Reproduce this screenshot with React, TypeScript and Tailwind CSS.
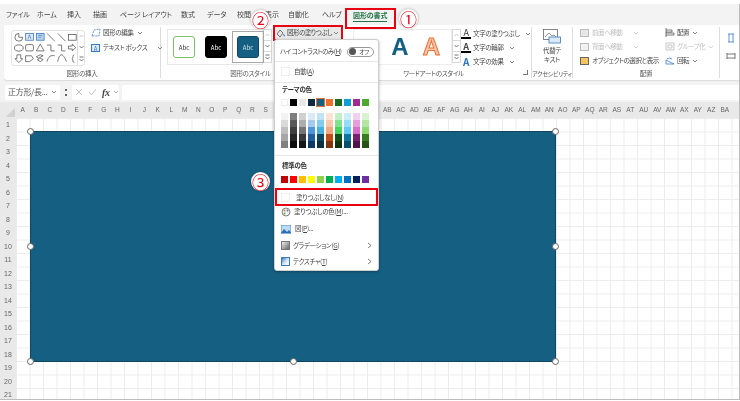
import React from "react";

const tabs: [string, number][] = [["ファイル",31],["ホーム",30],["挿入",26],["描画",27],["ページ レイアウト",61],["数式",26],["データ",30],["校閲",28],["表示",23],["自動化",34],["ヘルプ",31]];
const theme = ["#ffffff","#000000","#e8e8e8","#0e2841","#156082","#e97132","#196b24","#0f9ed5","#a02b93","#4ea72e"];
const tints = [
  ["#f2f2f2","#d9d9d9","#bfbfbf","#a6a6a6","#808080"],
  ["#7f7f7f","#595959","#3f3f3f","#262626","#0d0d0d"],
  ["#d0d0d0","#adadad","#757575","#3a3a3a","#171717"],
  ["#dceaf7","#a6caec","#4e95d9","#215f9a","#0d3a64"],
  ["#c1e4f5","#83cbeb","#45b0e1","#0f4761","#0a2f41"],
  ["#fbe3d6","#f6c6ad","#f1a983","#c04f15","#80350e"],
  ["#c1f0c8","#83e28e","#47d45a","#124f1a","#0d3512"],
  ["#caedfb","#95dcf7","#60caf3","#0b76a0","#074f6a"],
  ["#f2ceef","#e59edc","#d86dcd","#77206d","#4f1548"],
  ["#d9f2d0","#b4e5a2","#8ed973","#3a7c22","#275317"],
];
const standard = ["#c00000","#ff0000","#ffc000","#ffff00","#92d050","#00b050","#00b0f0","#0070c0","#002060","#7030a0"];
const letters = "ABCDEFGHIJKLMNOPQRSTUVWXYZ".split("");
const cols = [...letters, ...letters.map((l) => "A" + l), "BA"];
const rows = Array.from({ length: 21 }, (_, i) => i + 1);

function Chev({ c = "#666" }: { c?: string }) {
  return <svg width="6" height="4" viewBox="0 0 6 4" className="ml-[3px] shrink-0"><path d="M1 1l2 2 2-2" fill="none" stroke={c} strokeWidth="0.8" /></svg>;
}
function Scroll() {
  return (
    <div className="flex flex-col shrink-0 w-[9px] h-[34px] border border-[#d8d8d8] bg-white">
      <div className="flex-1 flex items-center justify-center border-b border-[#d8d8d8]"><svg width="5" height="4" viewBox="0 0 5 4"><path d="M.5 3l2-2 2 2" fill="none" stroke="#bbb" strokeWidth=".8" /></svg></div>
      <div className="flex-1 flex items-center justify-center border-b border-[#d8d8d8]"><svg width="5" height="4" viewBox="0 0 5 4"><path d="M.5 1l2 2 2-2" fill="none" stroke="#555" strokeWidth=".8" /></svg></div>
      <div className="flex-1 flex items-center justify-center"><svg width="5" height="6" viewBox="0 0 5 6"><path d="M.5 1h4M.5 3l2 2 2-2" fill="none" stroke="#555" strokeWidth=".8" /></svg></div>
    </div>
  );
}
function Label({ children }: { children: React.ReactNode }) {
  return <div className="h-[10px] leading-[10px] text-center text-[6.5px] text-[#555] shrink-0">{children}</div>;
}
function Abc({ bg, border, color }: { bg: string; border: string; color: string }) {
  return <div className="w-[22px] h-[22px] rounded-[3px] border flex items-center justify-center text-[6px] tracking-normal" style={{ background: bg, borderColor: border, color }}>Abc</div>;
}
function Gallery() {
  const s = { fill: "none", stroke: "#555", strokeWidth: 0.8 };
  return (
    <svg width="66" height="34" viewBox="0 0 66 34">
      <path d="M6 2a4 4 0 1 0 4 4H6z" {...s} />
      <rect x="13" y="2" width="8" height="7" fill="#dce9f7" stroke="#3a78c2" strokeWidth=".8" />
      <path d="M15.5 7.5L17 3.5l1.5 4" fill="none" stroke="#3a78c2" strokeWidth=".7" />
      <rect x="24" y="2" width="8" height="7" fill="#bcd6f0" stroke="#3a78c2" strokeWidth=".8" />
      <path d="M26 4h4M26 6h3" stroke="#3a78c2" strokeWidth=".7" />
      <path d="M35 2l8 8M46 2l8 8" {...s} />
      <rect x="57" y="3" width="8" height="6" {...s} />
      <ellipse cx="6" cy="17" rx="4.5" ry="3.2" {...s} />
      <rect x="13" y="13.5" width="8" height="6.5" rx="1.5" {...s} />
      <path d="M28 13l4 7h-8zM35 14h4v6h4M46 14h4v6h4M57 15h4v-2l3.5 3.5-3.5 3.5v-2h-4z" {...s} />
      <path d="M4 24h4v4h2l-4 4-4-4h2zM13 25h6l2 3-4 3h-4zM24 26l4-2 3 1-4 2 4 2-3 2-3-2 2-1zM35 31c1-5 4-7 8-6M46 31c1-6 3-7 4-7s3 2 5 7M63 24c-2 0-1 3-2 4 1 1 0 4 2 4" {...s} />
    </svg>
  );
}
function TextIcon({ kind }: { kind: "fill" | "line" | "fx" }) {
  if (kind === "fx") return <span className="w-[10px] text-center text-[10px] leading-none font-bold text-[#2e75b6]">A</span>;
  return (
    <span className="w-[10px] flex flex-col items-center">
      <span className={`text-[9px] leading-[8px] ${kind === "line" ? "font-bold text-[#444]" : "text-[#333]"}`}>A</span>
      <span className="block w-[10px] h-[2px] bg-black" />
    </span>
  );
}
function Handle({ cls }: { cls: string }) {
  return <span className={`absolute w-[7px] h-[7px] rounded-full bg-white border-[1.5px] border-[#666] ${cls}`} />;
}
function Badge({ cls, children }: { cls: string; children: string }) {
  return <span className={`absolute w-[19px] h-[19px] rounded-full bg-white shadow-[0_0_3px_rgba(0,0,0,0.3)] flex items-center justify-center text-[17px] leading-none tracking-normal text-[#e60012] ${cls}`}>{children}</span>;
}
function Swatches({ colors, sel }: { colors: string[]; sel?: number }) {
  return (
    <div className="flex gap-[2px] pl-[1px]">
      {colors.map((c, i) => (
        <span key={c} className={`w-[7px] h-[7px] ${i === sel ? "outline outline-[#e97132]" : ""} ${c === "#ffffff" ? "border border-[#eee]" : ""}`} style={{ background: c }} />
      ))}
    </div>
  );
}

export default function App() {
  return (
    <div className="relative w-[740px] h-[401px] overflow-hidden bg-white pt-[4px] text-[#444] blur-[0.35px] tracking-[-0.3px] [font-family:'Noto_Sans_CJK_JP','Noto_Sans',sans-serif] [font-feature-settings:'palt']">
      <div className="h-[396px] bg-[#f3f3f3] border-r border-b border-[#bdbdbd] flex flex-col overflow-hidden">
        {/* tabs */}
        <div className="h-[21px] flex items-center pl-[6px] text-[7px] tracking-[-0.1px] text-[#444] shrink-0">
          {tabs.map(([t, w]) => <span key={t} className="shrink-0 whitespace-nowrap" style={{ width: w }}>{t}</span>)}
          <span className="text-[#217346] font-bold border-b-[1.5px] border-[#217346] leading-[11px] mt-[2px] whitespace-nowrap">図形の書式</span>
        </div>
        {/* ribbon */}
        <div className="ml-[4px] h-[55px] shrink-0 bg-white rounded-l-[3px] flex shadow-[0_1px_1px_rgba(0,0,0,0.1)]">
          <div className="w-[157px] shrink-0 flex flex-col border-r border-[#ddd] my-[2px]">
            <div className="h-[43px] flex pl-[7px] pt-[3px] gap-[6px]">
              <div className="w-[74px] h-[36px] shrink-0 flex border border-[#e3e3e3] rounded-[3px] pl-[1px] items-center justify-between">
                <Gallery />
                <div className="flex flex-col gap-[1px] w-[7px] h-[34px] border-l border-[#ddd] items-center justify-around">
                  <svg width="5" height="4" viewBox="0 0 5 4"><path d="M.5 3l2-2 2 2" fill="none" stroke="#bbb" strokeWidth=".8" /></svg>
                  <svg width="5" height="4" viewBox="0 0 5 4"><path d="M.5 1l2 2 2-2" fill="none" stroke="#555" strokeWidth=".8" /></svg>
                  <svg width="5" height="6" viewBox="0 0 5 6"><path d="M.5 1h4M.5 3l2 2 2-2" fill="none" stroke="#555" strokeWidth=".8" /></svg>
                </div>
              </div>
              <div className="flex flex-col gap-[4px] -mt-[3px] text-[6.5px] whitespace-nowrap">
                <div className="h-[11px] flex items-center">
                  <svg width="10" height="9" viewBox="0 0 10 9" className="mr-[2px]"><path d="M1 8l2-6 6-1-1 7z" fill="none" stroke="#3a78c2" strokeWidth=".8" strokeDasharray="2 1" /></svg>
                  図形の編集<Chev />
                </div>
                <div className="h-[11px] flex items-center">
                  <span className="w-[9px] h-[8px] mr-[3px] border border-[#3a78c2] bg-[#dce9f7] text-[6px] leading-[7px] text-center text-[#3a78c2]">A</span>
                  テキスト ボックス<span className="ml-[7px]"><Chev /></span>
                </div>
              </div>
            </div>
            <Label>図形の挿入</Label>
          </div>

          <div className="w-[179px] shrink-0 flex flex-col my-[2px]">
            <div className="h-[43px] flex pl-[6px] pt-[2px]">
              <div className="w-[96px] h-[36px] shrink-0 border border-[#e8e8e8] flex items-center gap-[10px] pl-[5px]">
                <Abc bg="#ffffff" border="#7fbf6a" color="#333" />
                <Abc bg="#000000" border="#000000" color="#fff" />
                <div className="relative">
                  <Abc bg="#156082" border="#0f4761" color="#cfe4ee" />
                  <span className="absolute -inset-[5px] border border-[#a8a8a8]" />
                </div>
              </div>
              <Scroll />
            </div>
            <Label>図形のスタイル</Label>
          </div>

          <div className="w-[192px] shrink-0 flex flex-col border-r border-[#ddd] my-[2px]">
            <div className="h-[43px] flex pl-[13px] pt-[2px]">
              <div className="w-[99px] h-[36px] shrink-0 border border-[#eeeeee] flex items-center justify-end gap-[14px] pr-[11px] text-[24px] leading-none font-['Liberation_Sans'] font-bold tracking-normal">
                <span className="text-[#156082]">A</span>
                <span className="text-[#f6c6ad] [-webkit-text-stroke:1px_#e97132]">A</span>
              </div>
              <Scroll />
              <div className="ml-[0px] -mt-[1px] flex flex-col text-[6.5px] text-[#444] gap-[3px] whitespace-nowrap">
                {([["fill","文字の塗りつぶし"],["line","文字の輪郭"],["fx","文字の効果"]] as const).map(([k, t]) => (
                  <div key={t} className="h-[11px] flex items-center gap-[2px]"><TextIcon kind={k} />{t}<Chev /></div>
                ))}
              </div>
            </div>
            <div className="relative"><Label><span className="ml-[-4px]">ワードアートのスタイル</span></Label><span className="absolute right-[3px] top-[2px] w-[5px] h-[5px] border-b border-r border-[#777]" /></div>
          </div>

          <div className="w-[41px] shrink-0 flex flex-col border-r border-[#ddd] my-[2px]">
            <div className="h-[43px] flex flex-col items-center pt-[2px]">
              <svg width="18" height="15" viewBox="0 0 18 15"><rect x=".5" y=".5" width="14" height="10" fill="#fff" stroke="#666" strokeWidth=".8" /><path d="M2 8l4-4 3 3 2-1 2 2" fill="none" stroke="#666" strokeWidth=".7" /><rect x="6" y="8" width="11.5" height="6" fill="#dce9f7" stroke="#3a78c2" strokeWidth=".8" /></svg>
              <span className="text-[6.5px] leading-[9px] mt-[2px] text-center text-[#444]">代替テ<br />キスト</span>
            </div>
            <Label><span className="text-[6px] whitespace-nowrap">アクセシビリティ</span></Label>
          </div>

          <div className="w-[147px] shrink-0 flex flex-col border-r border-[#ddd] my-[2px]">
            <div className="h-[43px] flex pl-[7px] text-[6.5px] tracking-[-0.45px] whitespace-nowrap">
              <div className="w-[85px] shrink-0 flex flex-col gap-[3px]">
                <div className="h-[11px] flex items-center text-[#bbb]"><span className="w-[9px] h-[8px] mr-[3px] border border-[#bbb] bg-[#e8e8e8]" />前面へ移動<span className="ml-[8px]"><Chev c="#ccc" /></span></div>
                <div className="h-[11px] flex items-center text-[#bbb]"><span className="w-[9px] h-[8px] mr-[3px] border border-[#bbb] bg-[#f2f2f2]" />背面へ移動<span className="ml-[8px]"><Chev c="#ccc" /></span></div>
                <div className="h-[11px] flex items-center"><span className="w-[9px] h-[8px] mr-[3px] border border-[#666] bg-[#f7c55f]" />オブジェクトの選択と表示</div>
              </div>
              <div className="flex flex-col gap-[3px]">
                <div className="h-[11px] flex items-center"><svg width="10" height="9" viewBox="0 0 10 9" className="mr-[2px]"><path d="M1 0v9M1 2h6v2H1M1 5h8v2H1" fill="none" stroke="#555" strokeWidth=".8" /></svg>配置<Chev /></div>
                <div className="h-[11px] flex items-center text-[#bbb]"><svg width="10" height="9" viewBox="0 0 10 9" className="mr-[2px]"><path d="M1 1h8v7H1zM3 3h4v3H3z" fill="none" stroke="#bbb" strokeWidth=".8" /></svg>グループ化<Chev c="#ccc" /></div>
                <div className="h-[11px] flex items-center"><svg width="10" height="9" viewBox="0 0 10 9" className="mr-[2px]"><path d="M1 8h8L1 4zM2 3a4 4 0 0 1 5 0" fill="none" stroke="#3a78c2" strokeWidth=".8" /></svg>回転<Chev /></div>
              </div>
            </div>
            <Label>配置</Label>
          </div>

          <div className="flex-1 flex flex-col pl-[6px] pt-[8px] gap-[8px]">
            <svg width="10" height="10" viewBox="0 0 10 10"><path d="M2 1h6M2 9h6M3 1v8M7 1v8" fill="none" stroke="#3a78c2" strokeWidth=".8" /></svg>
            <svg width="10" height="10" viewBox="0 0 10 10"><path d="M1 2v6M9 2v6M1 3h8M1 7h8" fill="none" stroke="#555" strokeWidth=".8" /></svg>
          </div>
        </div>
        {/* formula bar */}
        <div className="h-[22px] shrink-0 flex items-center pl-[5px] pt-[2px] text-[#888]">
          <div className="w-[55px] h-[15px] bg-white rounded-[2px] flex items-center justify-between px-[3px] text-[8px] text-[#555] whitespace-nowrap">正方形/長...<Chev /></div>
          <span className="w-[2px] h-[7px] mx-[5px] border-l-2 border-dotted border-[#666]" />
          <div className="w-[47px] h-[15px] bg-white rounded-[2px] flex items-center gap-[5px] pl-[3px]">
            <svg width="8" height="8" viewBox="0 0 8 8"><path d="M1 1l6 6M7 1L1 7" stroke="#bbb" strokeWidth=".9" /></svg>
            <svg width="9" height="8" viewBox="0 0 9 8"><path d="M1 4l2.5 3L8 1" fill="none" stroke="#bbb" strokeWidth=".9" /></svg>
            <span className="font-['Liberation_Serif'] italic font-bold text-[10px] text-[#444]">fx</span>
            <svg width="6" height="4" viewBox="0 0 6 4" className="-ml-[2px]"><path d="M1 1l2 2 2-2" fill="none" stroke="#999" strokeWidth="0.8" /></svg>
          </div>
          <div className="ml-[3px] flex-1 h-[15px] bg-white rounded-l-[2px]" />
        </div>
        {/* column headers */}
        <div className="h-[16px] shrink-0 flex overflow-hidden bg-[#e9e9e9] text-[6.5px] tracking-normal text-[#666] font-['Liberation_Sans']">
          <div className="w-[16px] shrink-0 flex items-end justify-end pr-[1px] pb-[1px]"><svg width="9" height="9" viewBox="0 0 9 9"><path d="M9 0v9H0z" fill="#d2d2d2" /></svg></div>
          {cols.map((c) => <span key={c} className="w-[13.5px] shrink-0 text-center leading-[15px] whitespace-nowrap">{c}</span>)}
        </div>
        {/* sheet */}
        <div className="flex-1 flex min-h-0">
          <div className="w-[16px] shrink-0 bg-[#e9e9e9] text-[7px] tracking-normal text-[#666] font-['Liberation_Sans']">
            {rows.map((r) => <div key={r} className="h-[13.5px] leading-[13.5px] text-center">{r}</div>)}
          </div>
          <div className="relative flex-1 bg-white bg-[linear-gradient(#ececec_1px,transparent_1px),linear-gradient(90deg,#ececec_1px,transparent_1px)] bg-[size:13.5px_13.5px]">
            <div className="absolute left-[14px] top-[13px] w-[526px] h-[231px] bg-[#156082] border border-[#0f4761]">
              <Handle cls="-left-[4px] -top-[4px]" />
              <Handle cls="left-[259px] -top-[4px]" />
              <Handle cls="-right-[4px] -top-[4px]" />
              <Handle cls="-left-[4px] top-[111px]" />
              <Handle cls="-right-[4px] top-[111px]" />
              <Handle cls="-left-[4px] -bottom-[4px]" />
              <Handle cls="left-[259px] -bottom-[4px]" />
              <Handle cls="-right-[4px] -bottom-[4px]" />
            </div>
          </div>
        </div>
      </div>

      {/* dropdown button */}
      <div className="absolute left-[273px] top-[25px] w-[70px] h-[16px] bg-[#e8e8e8] border-[2.5px] border-[#e60012] flex items-center pl-[1px] text-[6.5px] tracking-[-0.5px] text-[#444] whitespace-nowrap">
        <svg width="10" height="9" viewBox="0 0 10 9" className="mr-[1px] shrink-0"><path d="M1 5l3-4 3 3-3 4z" fill="none" stroke="#555" strokeWidth=".8" /><path d="M7 5l2 1-1 2z" fill="#3a78c2" /></svg>
        図形の塗りつぶし
        <svg width="6" height="4" viewBox="0 0 6 4" className="ml-[1px] shrink-0"><path d="M1 1l2 2 2-2" fill="none" stroke="#666" strokeWidth="0.8" /></svg>
      </div>

      {/* menu */}
      <div className="absolute left-[274px] top-[39px] w-[105px] h-[232px] bg-white rounded-[3px] border border-[#cfcfcf] shadow-[0_1px_3px_rgba(0,0,0,0.3)] text-[6.5px] text-[#444] pl-[5px] flex flex-col whitespace-nowrap">
        <div className="h-[18px] mt-[3px] flex items-center">
          <span className="w-[67px] shrink-0 tracking-[-0.5px]">ハイ コントラストのみ(<u>H</u>)</span>
          <span className="w-[27px] h-[10px] shrink-0 rounded-full border border-[#999] flex items-center pl-[1px] text-[6px] gap-[3px]"><span className="w-[7px] h-[7px] rounded-full bg-[#555]" />オフ</span>
        </div>
        <div className="-ml-[5px] border-t border-[#e8e8e8]" />
        <div className="h-[21px] flex items-center pl-[1px]"><span className="w-[9px] h-[9px] border border-[#eee] mr-[4px]" />自動(<u>A</u>)</div>
        <div className="-ml-[5px] border-t border-[#e8e8e8]" />
        <div className="h-[13px] flex items-center pl-[2px] font-bold text-[#333]">テーマの色</div>
        <div className="mt-[3px]"><Swatches colors={theme} sel={4} /></div>
        <div className="flex gap-[2px] pl-[1px] mt-[7px]">
          {tints.map((col, i) => (
            <div key={i} className="flex flex-col w-[7px]">
              {col.map((c, j) => <span key={j} className="h-[7px] block" style={{ background: c }} />)}
            </div>
          ))}
        </div>
        <div className="-ml-[5px] mt-[7px] border-t border-[#e8e8e8]" />
        <div className="h-[13px] mt-[4px] flex items-center pl-[2px] font-bold text-[#333]">標準の色</div>
        <div className="mt-[3px]"><Swatches colors={standard} /></div>
        <div className="h-[18px] mt-[6px] flex items-center pl-[1px]"><span className="w-[9px] h-[9px] border border-[#eee] mr-[6px]" />塗りつぶしなし(<u>N</u>)</div>
        <div className="h-[16px] -mt-[2px] flex items-center pl-[1px]"><svg width="10" height="10" viewBox="0 0 10 10" className="mr-[3px]"><circle cx="5" cy="5" r="4" fill="#f4f4f4" stroke="#666" strokeWidth=".8" /><circle cx="3.5" cy="3.5" r=".9" fill="#e97132" /><circle cx="6.5" cy="3.5" r=".9" fill="#3a78c2" /><circle cx="3.5" cy="6.5" r=".9" fill="#4ea72e" /></svg>塗りつぶしの色(<u>M</u>)...</div>
        <div className="h-[17px] mt-[1px] flex items-center pl-[1px]"><svg width="10" height="9" viewBox="0 0 10 9" className="mr-[4px]"><rect width="10" height="9" fill="#bcd9f2" stroke="#3a78c2" strokeWidth=".8" /><path d="M0 8l3-4 3 3 2-2 2 3z" fill="#2a6fb5" /></svg>図(<u>P</u>)...</div>
        <div className="h-[16px] flex items-center pl-[1px] pr-[6px]"><span className="w-[9px] h-[9px] mr-[3px] border border-[#777] bg-[linear-gradient(135deg,#eee,#666)]" />グラデーション(<u>G</u>)<span className="ml-auto"><svg width="5" height="7" viewBox="0 0 5 7"><path d="M1 1l3 2.5L1 6" fill="none" stroke="#777" strokeWidth=".9" /></svg></span></div>
        <div className="h-[17px] flex items-center pl-[1px] pr-[6px]"><span className="w-[9px] h-[9px] mr-[3px] border border-[#3a78c2] bg-[linear-gradient(135deg,#3a78c2,#dce9f7_55%,#fff)]" />テクスチャ(<u>T</u>)<span className="ml-auto"><svg width="5" height="7" viewBox="0 0 5 7"><path d="M1 1l3 2.5L1 6" fill="none" stroke="#777" strokeWidth=".9" /></svg></span></div>
      </div>

      {/* annotations */}
      <span className="absolute left-[345px] top-[8px] w-[51px] h-[21px] border-[2.5px] border-[#e60012]" />
      <span className="absolute left-[275px] top-[188px] w-[103px] h-[18px] border-[2.5px] border-[#e60012]" />
      <Badge cls="left-[399px] top-[9px]">①</Badge>
      <Badge cls="left-[251px] top-[10px]">②</Badge>
      <Badge cls="left-[251px] top-[172px]">③</Badge>
    </div>
  );
}
